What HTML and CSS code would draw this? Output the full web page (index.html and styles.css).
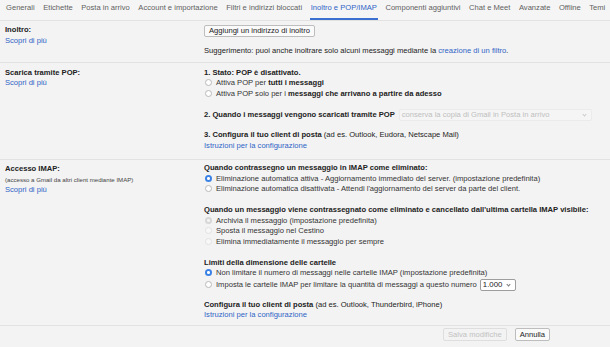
FILE: index.html
```html
<!DOCTYPE html>
<html lang="it">
<head>
<meta charset="utf-8">
<title>Impostazioni - Inoltro e POP/IMAP</title>
<link rel="stylesheet" href="styles.css">
</head>
<body>
<nav class="tabs">
  <span class="tab">Generali</span>
  <span class="tab">Etichette</span>
  <span class="tab">Posta in arrivo</span>
  <span class="tab">Account e importazione</span>
  <span class="tab">Filtri e indirizzi bloccati</span>
  <span class="tab active">Inoltro e POP/IMAP</span>
  <span class="tab">Componenti aggiuntivi</span>
  <span class="tab">Chat e Meet</span>
  <span class="tab">Avanzate</span>
  <span class="tab">Offline</span>
  <span class="tab">Temi</span>
</nav>

<section class="row row-fwd">
  <div class="label">
    <div class="b">Inoltro:</div>
    <a class="link">Scopri di più</a>
  </div>
  <div class="content">
    <div class="group"><span class="btn">Aggiungi un indirizzo di inoltro</span></div>
    <div class="line">Suggerimento: puoi anche inoltrare solo alcuni messaggi mediante la <a class="link">creazione di un filtro</a>.</div>
  </div>
</section>

<section class="row row-pop">
  <div class="label">
    <div class="b">Scarica tramite POP:</div>
    <a class="link">Scopri di più</a>
  </div>
  <div class="content">
    <div class="group">
      <div class="line b">1. Stato: POP è disattivato.</div>
      <div class="line opt"><span class="radio"></span>Attiva POP per <b>tutti i messaggi</b></div>
      <div class="line opt"><span class="radio"></span>Attiva POP solo per i <b>messaggi che arrivano a partire da adesso</b></div>
    </div>
    <div class="group">
      <div class="line sel-line"><b>2. Quando i messaggi vengono scaricati tramite POP</b><span class="select wide disabled">conserva la copia di Gmail in Posta in arrivo<span class="chev"></span></span></div>
    </div>
    <div class="group">
      <div class="line"><b>3. Configura il tuo client di posta</b> (ad es. Outlook, Eudora, Netscape Mail)</div>
      <div class="line"><a class="link">Istruzioni per la configurazione</a></div>
    </div>
  </div>
</section>

<section class="row row-imap">
  <div class="label">
    <div class="b">Accesso IMAP:</div>
    <div class="small">(accesso a Gmail da altri client mediante IMAP)</div>
    <a class="link">Scopri di più</a>
  </div>
  <div class="content">
    <div class="group">
      <div class="line b">Quando contrassegno un messaggio in IMAP come eliminato:</div>
      <div class="line opt"><span class="radio on"></span>Eliminazione automatica attiva - Aggiornamento immediato del server. (impostazione predefinita)</div>
      <div class="line opt"><span class="radio"></span>Eliminazione automatica disattivata - Attendi l'aggiornamento del server da parte del client.</div>
    </div>
    <div class="group">
      <div class="line b">Quando un messaggio viene contrassegnato come eliminato e cancellato dall'ultima cartella IMAP visibile:</div>
      <div class="line opt"><span class="radio dis-on"></span>Archivia il messaggio (impostazione predefinita)</div>
      <div class="line opt"><span class="radio dis"></span>Sposta il messaggio nel Cestino</div>
      <div class="line opt"><span class="radio dis"></span>Elimina immediatamente il messaggio per sempre</div>
    </div>
    <div class="group">
      <div class="line b">Limiti della dimensione delle cartelle</div>
      <div class="line opt"><span class="radio on"></span>Non limitare il numero di messaggi nelle cartelle IMAP (impostazione predefinita)</div>
      <div class="line opt"><span class="radio"></span>Imposta le cartelle IMAP per limitare la quantità di messaggi a questo numero <span class="select num">1.000<span class="chev"></span></span></div>
    </div>
    <div class="group">
      <div class="line"><b>Configura il tuo client di posta</b> (ad es. Outlook, Thunderbird, iPhone)</div>
      <div class="line"><a class="link">Istruzioni per la configurazione</a></div>
    </div>
  </div>
</section>

<footer class="actions">
  <span class="btn disabled">Salva modifiche</span>
  <span class="btn">Annulla</span>
</footer>
</body>
</html>
```

FILE: styles.css
```css
* { box-sizing: border-box; }

html, body {
  margin: 0;
  padding: 0;
  background: #f3f3f3;
}

body {
  font-family: "Liberation Sans", Arial, Helvetica, sans-serif;
  font-size: 7.6px;
  color: #222;
  line-height: 10.7px;
  width: 610px;
  overflow: hidden;
}

b, .b { font-weight: bold; color: #222; }

.tabs {
  display: flex;
  gap: 6.5px;
  padding-left: 5px;
  height: 21px;
  border-bottom: 1px solid #e2e2e2;
  white-space: nowrap;
  font-size: 7.6px;
  color: #5f5f5f;
  background: #f5f5f5;
}

.tab {
  display: flex;
  align-items: center;
  height: 20px;
  padding: 0 1px 2px;
  border-bottom: 2px solid transparent;
}

.tab.active {
  color: #2f64c6;
  border-bottom-color: #3b6fd0;
}

.row {
  display: grid;
  grid-template-columns: 199px 1fr;
  border-bottom: 1px solid #e2e2e2;
}

.row-fwd { padding: 4px 0 5px; }
.row-pop { padding: 5px 0 7px; }
.row-imap { padding: 3px 0 4px; }

.label {
  padding-left: 5px;
  display: flex;
  flex-direction: column;
}

.row-imap .label { padding-top: 1px; }

.small {
  font-size: 6.1px;
  line-height: 10.5px;
  color: #444;
}

.link {
  color: #2f64c6;
  text-decoration: none;
}

.content {
  padding-left: 5px;
}

.group { margin-bottom: 10px; }
.group:last-child { margin-bottom: 0; }
.row-fwd .group { margin-bottom: 9px; }

.line {
  white-space: nowrap;
  height: 10.7px;
}

.opt { color: #333; }

.radio {
  display: inline-block;
  vertical-align: -1px;
  width: 7px;
  height: 7px;
  border-radius: 50%;
  border: 1px solid #b9b9b9;
  background: #fff;
  margin: 0 4px 0 1px;
}

.radio.on {
  border: none;
  background: radial-gradient(circle, #fff 0 1.3px, #3c82e6 1.6px);
}

.radio.dis {
  border-color: #e2e2e2;
  background: #f8f8f8;
}

.radio.dis-on {
  border: none;
  background: radial-gradient(circle, #f4f4f4 0 1.3px, #d7d7d7 1.6px);
}

.btn {
  display: inline-block;
  height: 12px;
  line-height: 10px;
  padding: 0 4px;
  border: 1px solid #bdbdbd;
  border-radius: 2px;
  background: #fafafa;
  color: #222;
  white-space: nowrap;
}

.sel-line {
  display: flex;
  align-items: center;
}

.select {
  position: relative;
  display: inline-flex;
  align-items: center;
  height: 12px;
  border: 1px solid #9d9d9d;
  border-radius: 2px;
  background: #fff;
  color: #222;
  padding: 0 14px 0 2px;
  vertical-align: middle;
}

.select.wide {
  margin-left: 4px;
  width: 193px;
}

.select.disabled {
  color: #c0c0c0;
  border-color: #ebebeb;
  background: #f5f5f5;
}

.select.num {
  margin-left: 1px;
  width: 36px;
  font-size: 7.8px;
}

.chev {
  position: absolute;
  right: 5px;
  top: 3px;
  width: 3px;
  height: 3px;
  border-right: 1px solid #777;
  border-bottom: 1px solid #777;
  transform: rotate(45deg);
}

.select.disabled .chev {
  border-color: #ccc;
}

.actions {
  display: flex;
  justify-content: flex-end;
  gap: 8px;
  padding: 2px 60px 0 0;
}

.actions .btn { height: 13px; line-height: 11px; }

.btn.disabled {
  color: #c2c2c2;
  border-color: #dedede;
  background: #f3f3f3;
}
```
